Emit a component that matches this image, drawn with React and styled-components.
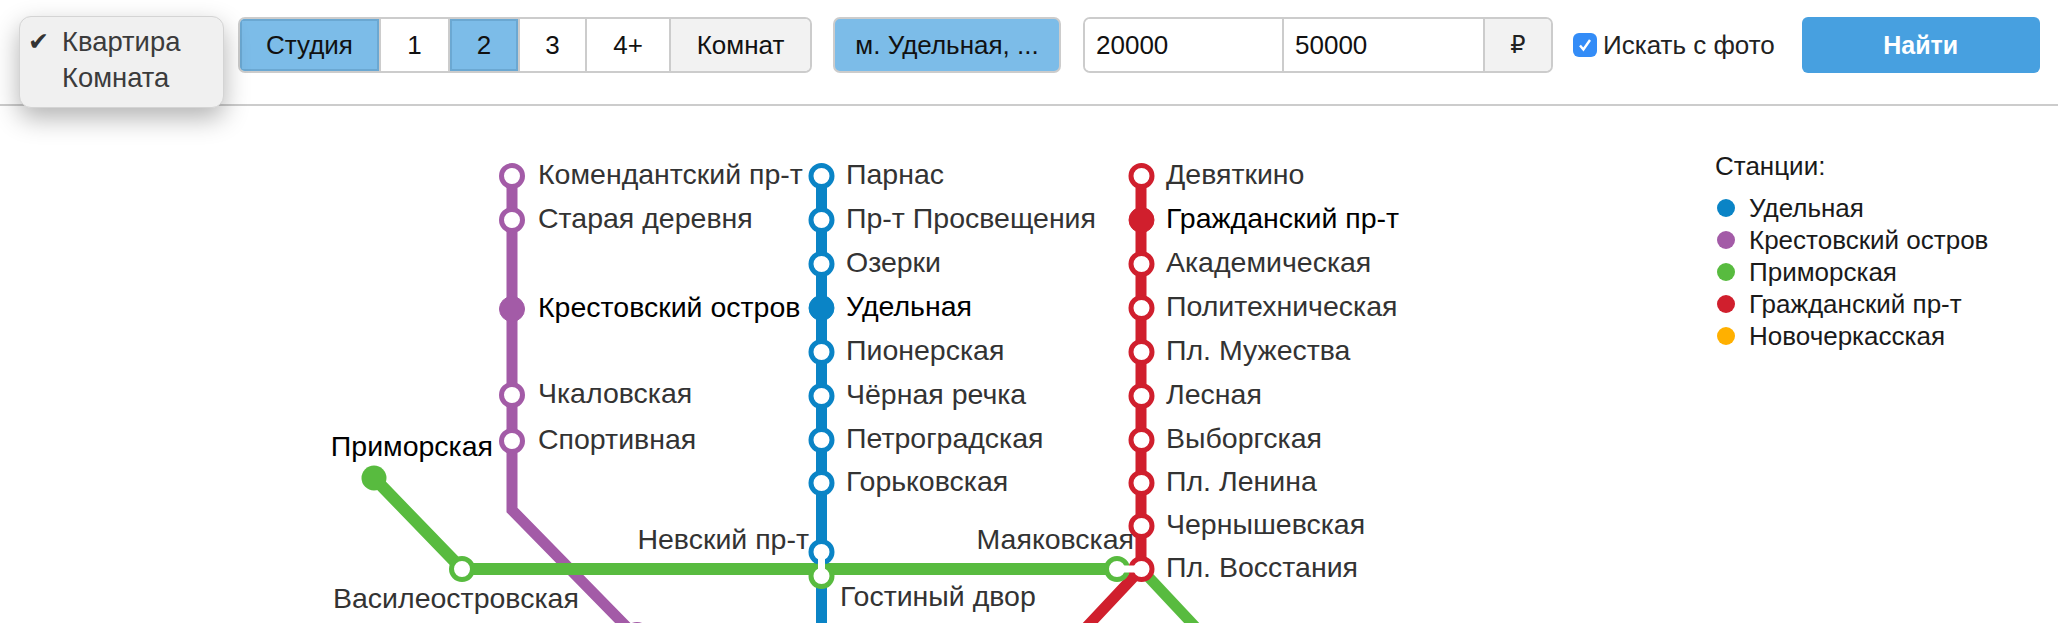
import { Fragment } from 'react'
import styled, { createGlobalStyle } from 'styled-components'

const PURPLE = '#a35ba7'
const BLUE = '#0a84c6'
const GREEN = '#58bb3f'
const RED = '#d01f2d'
const ORANGE = '#ffb000'

const GlobalStyle = createGlobalStyle`
  html, body {
    margin: 0;
    padding: 0;
    background: #fff;
    overflow: hidden;
  }
  body {
    font-family: "Liberation Sans", Arial, sans-serif;
    color: #111;
  }
`

const Page = styled.div`
  width: 2058px;
  height: 623px;
  position: relative;
  overflow: hidden;
`

const Toolbar = styled.header`
  display: flex;
  align-items: flex-start;
  height: 106px;
  padding: 17px 18px 0 238px;
  box-sizing: border-box;
  border-bottom: 2px solid #ccc;
`

const TypeMenu = styled.ul`
  position: absolute;
  left: 19px;
  top: 16px;
  width: 205px;
  height: 92px;
  margin: 0;
  padding: 7px 0 0;
  box-sizing: border-box;
  list-style: none;
  background: #f0f0f0;
  border: 1px solid #d4d4d4;
  border-radius: 12px;
  box-shadow: 0 10px 26px rgba(0, 0, 0, 0.3);
  z-index: 2;
`

const TypeItem = styled.li`
  height: 36px;
  line-height: 36px;
  padding-left: 42px;
  font-size: 27.4px;
  color: #3b3b3b;
  position: relative;
`

const Tick = styled.span`
  position: absolute;
  left: 8px;
  top: 0;
  font-size: 25px;
  font-family: "DejaVu Sans", sans-serif;
  color: #333;
`

const Group = styled.div`
  display: flex;
  width: ${p => p.$width}px;
  height: 56px;
  border: 2px solid #ccc;
  border-radius: 7px;
  overflow: hidden;
  box-sizing: border-box;
  margin-right: ${p => p.$gap}px;
`

const Segment = styled.button`
  width: ${p => p.$width}px;
  height: 100%;
  padding: 0;
  border: 0;
  border-left: ${p => (p.$first ? '0' : '2px solid #ccc')};
  background: ${p => (p.$on ? '#7cbce8' : p.$muted ? '#f2f2f2' : '#fff')};
  box-shadow: ${p => (p.$on ? 'inset 0 0 0 2px #6ba8d2' : 'none')};
  font: 26px "Liberation Sans", Arial, sans-serif;
  color: #111;
`

const MetroButton = styled.button`
  width: 228px;
  height: 56px;
  margin-right: 22px;
  padding: 0;
  border: 2px solid #ccc;
  border-radius: 7px;
  background: #7cbce8;
  font: 26px "Liberation Sans", Arial, sans-serif;
  color: #111;
`

const PriceInput = styled.input`
  width: ${p => p.$width}px;
  height: 100%;
  box-sizing: border-box;
  padding: 0 0 0 11px;
  border: 0;
  border-left: ${p => (p.$first ? '0' : '2px solid #ccc')};
  outline: none;
  font: 26px "Liberation Sans", Arial, sans-serif;
  color: #111;
  background: #fff;
`

const Currency = styled.span`
  flex: 1;
  display: flex;
  align-items: center;
  justify-content: center;
  background: #f2f2f2;
  border-left: 2px solid #ccc;
  font: 24px "DejaVu Sans", sans-serif;
  color: #222;
`

const PhotoCheck = styled.label`
  display: flex;
  align-items: center;
  height: 56px;
  margin-right: 27px;
  font-size: 26px;
  color: #222;
`

const CheckBox = styled.span`
  width: 24px;
  height: 24px;
  border-radius: 6px;
  background: #338cf7;
  margin-right: 6px;
  display: flex;
  align-items: center;
  justify-content: center;
`

const SearchButton = styled.button`
  width: 238px;
  height: 56px;
  border: 0;
  border-radius: 6px;
  background: #47a0e0;
  color: #fff;
  font: bold 25px "Liberation Sans", Arial, sans-serif;
`

const MapArea = styled.main`
  display: flex;
  justify-content: space-between;
  height: 517px;
`

const Scheme = styled.svg`
  display: block;
  width: 1700px;
  height: 517px;
`

const Legend = styled.aside`
  width: 343px;
  padding-top: 47px;
  font-size: 26px;
  color: #1a1a1a;
`

const LegendTitle = styled.div`
  height: 26px;
  line-height: 26px;
  margin-bottom: 13px;
`

const LegendRow = styled.div`
  display: flex;
  align-items: center;
  height: 32px;
`

const LegendDot = styled.span`
  width: 18px;
  height: 18px;
  border-radius: 50%;
  margin: 0 14px 0 2px;
  background: ${p => p.$color};
`

const StationName = styled.text`
  font: 28.5px "Liberation Sans", Arial, sans-serif;
  fill: ${p => (p.$on ? '#000' : '#333')};
`

const purple = [
  ['Комендантский пр-т', 176],
  ['Старая деревня', 220],
  ['Крестовский остров', 309, true],
  ['Чкаловская', 395],
  ['Спортивная', 441],
]

const blue = [
  ['Парнас', 176],
  ['Пр-т Просвещения', 220],
  ['Озерки', 264],
  ['Удельная', 308, true],
  ['Пионерская', 352],
  ['Чёрная речка', 396],
  ['Петроградская', 440],
  ['Горьковская', 483],
]

const red = [
  ['Девяткино', 176],
  ['Гражданский пр-т', 220, true],
  ['Академическая', 264],
  ['Политехническая', 308],
  ['Пл. Мужества', 352],
  ['Лесная', 396],
  ['Выборгская', 440],
  ['Пл. Ленина', 483],
  ['Чернышевская', 526],
  ['Пл. Восстания', 569],
]

const legend = [
  ['Удельная', BLUE],
  ['Крестовский остров', PURPLE],
  ['Приморская', GREEN],
  ['Гражданский пр-т', RED],
  ['Новочеркасская', ORANGE],
]

function Station({ x, y, color, on }) {
  return <circle cx={x} cy={y} r={on ? 12.5 : 10.5} fill={on ? color : '#fff'} stroke={color} strokeWidth={on ? 1 : 5} />
}

function Line({ stations, x, color, labelX }) {
  return stations.map(([name, y, on]) => (
    <Fragment key={name}>
      <Station x={x} y={y} color={color} on={on} />
      <StationName x={labelX} y={y + 8} $on={on}>{name}</StationName>
    </Fragment>
  ))
}

export default function App() {
  return (
    <Page>
      <GlobalStyle />
      <TypeMenu>
        <TypeItem><Tick>✔</Tick>Квартира</TypeItem>
        <TypeItem>Комната</TypeItem>
      </TypeMenu>
      <Toolbar>
        <Group $gap={21} $width={574}>
          <Segment $first $on $width={139}>Студия</Segment>
          <Segment $width={69}>1</Segment>
          <Segment $on $width={70}>2</Segment>
          <Segment $width={67}>3</Segment>
          <Segment $width={84}>4+</Segment>
          <Segment $muted $width={141}>Комнат</Segment>
        </Group>
        <MetroButton>м. Удельная, ...</MetroButton>
        <Group $gap={20} $width={470}>
          <PriceInput $first $width={197} defaultValue="20000" />
          <PriceInput $width={201} defaultValue="50000" />
          <Currency>₽</Currency>
        </Group>
        <PhotoCheck>
          <CheckBox>
            <svg width="16" height="16" viewBox="0 0 16 16" fill="none" stroke="#fff" strokeWidth="2.4">
              <path d="M3 8.5l3.4 4L13 3" />
            </svg>
          </CheckBox>
          Искать с фото
        </PhotoCheck>
        <SearchButton>Найти</SearchButton>
      </Toolbar>
      <MapArea>
        <Scheme viewBox="0 106 1700 517">
          <g fill="none" strokeWidth="11">
            <path d="M512 176V510L660 661" stroke={PURPLE} />
            <path d="M821.5 176V640" stroke={BLUE} />
            <path d="M1141 176V569L1065 650" stroke={RED} />
            <path d="M1141 569L1217 650" stroke={GREEN} />
          </g>
          <path d="M374 478L462 569H1116" fill="none" stroke={GREEN} strokeWidth="12" />
          <Station x={637} y={635} color={PURPLE} />
          <Station x={462} y={569} color={GREEN} />
          <Station x={821.5} y={552} color={BLUE} />
          <Station x={821.5} y={576} color={GREEN} />
          <Station x={1117} y={569} color={GREEN} />
          <circle cx="374" cy="478" r="12.5" fill={GREEN} />
          <Line stations={purple} x={512} color={PURPLE} labelX={538} />
          <Line stations={blue} x={821.5} color={BLUE} labelX={846} />
          <Line stations={red} x={1141.5} color={RED} labelX={1166} />
          <path d="M821.5 556V572M1121 569H1137" stroke="#fff" strokeWidth="7" />
          <StationName x={493} y={456} $on textAnchor="end">Приморская</StationName>
          <StationName x={333} y={608}>Василеостровская</StationName>
          <StationName x={809} y={549} textAnchor="end">Невский пр-т</StationName>
          <StationName x={1134} y={549} textAnchor="end">Маяковская</StationName>
          <StationName x={840} y={606}>Гостиный двор</StationName>
        </Scheme>
        <Legend>
          <LegendTitle>Станции:</LegendTitle>
          {legend.map(([name, color]) => (
            <LegendRow key={name}>
              <LegendDot $color={color} />
              {name}
            </LegendRow>
          ))}
        </Legend>
      </MapArea>
    </Page>
  )
}
